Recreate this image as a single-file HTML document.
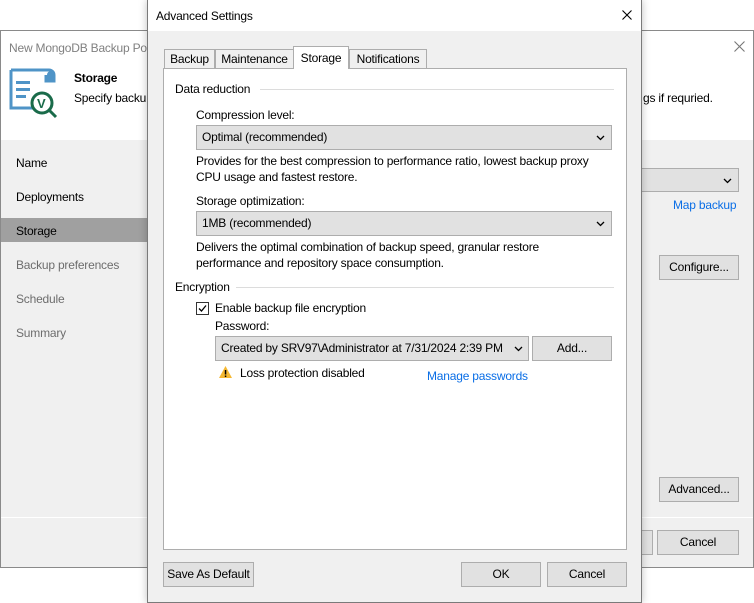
<!DOCTYPE html>
<html><head><style>
*{margin:0;padding:0;box-sizing:border-box}
body{width:754px;height:603px;background:#fff;position:relative;overflow:hidden;font-family:"Liberation Sans",sans-serif;font-size:12px;color:#000;letter-spacing:-0.2px}
.a{position:absolute;white-space:nowrap}
.btn{position:absolute;background:#e1e1e1;border:1px solid #adadad;text-align:center;line-height:23px}
.dd{position:absolute;background:#e1e1e1;border:1px solid #adadad;padding-left:5px;line-height:23px}
.dd svg{position:absolute;right:6px;top:9px}
.gray{color:#6d6d6d}
.link{color:#0a6ee6}
</style></head><body>
<div class="a" style="left:0;top:30px;width:754px;height:538px;border:1px solid #8a8a8a;background:#f0f0f0"></div>
<div class="a" style="left:1px;top:31px;width:752px;height:109px;background:#fff"></div>
<div class="a gray" style="left:9px;top:41px;color:#808080">New MongoDB Backup Po</div>
<svg class="a" style="left:734px;top:41px" width="11" height="11"><path d="M0.5 0.5l10 10M10.5 0.5l-10 10" stroke="#777" stroke-width="1.1"/></svg>
<svg class="a" style="left:9px;top:67px" width="50" height="52" viewBox="0 0 50 52">
<path d="M2 3h38a5 5 0 0 1 5 5v6h-8V8" fill="none" stroke="#4f94c7" stroke-width="3"/>
<path d="M2 3v38h26" fill="none" stroke="#4f94c7" stroke-width="3"/>
<path d="M38 8a4 4 0 0 1 8 0v6h-8z" fill="#4f94c7"/>
<rect x="7" y="14" width="14" height="3" fill="#4f94c7"/><rect x="7" y="21" width="14" height="3" fill="#4f94c7"/><rect x="7" y="28" width="10" height="3" fill="#4f94c7"/>
<circle cx="33" cy="36" r="10" fill="#fff" stroke="#1a6b4a" stroke-width="3"/>
<line x1="40" y1="43" x2="47" y2="50" stroke="#1a6b4a" stroke-width="3"/>
<text x="28" y="41" font-size="13" font-weight="bold" fill="#1a6b4a" font-family="Liberation Sans">V</text>
</svg>
<div class="a" style="left:74px;top:71px;font-weight:bold">Storage</div>
<div class="a" style="left:74px;top:91px">Specify backu</div>
<div class="a" style="left:643px;top:91px">gs if requried.</div>
<div class="a" style="left:1px;top:218px;width:146px;height:24px;background:#a0a0a0"></div>
<div class="a" style="left:16px;top:156px">Name</div>
<div class="a" style="left:16px;top:190px">Deployments</div>
<div class="a" style="left:16px;top:224px">Storage</div>
<div class="a gray" style="left:16px;top:258px">Backup preferences</div>
<div class="a gray" style="left:16px;top:292px">Schedule</div>
<div class="a gray" style="left:16px;top:326px">Summary</div>
<div class="dd" style="left:630px;top:168px;width:109px;height:24px"><svg width="9" height="6"><path d="M1 1l3.5 3.5L8 1" fill="none" stroke="#000" stroke-width="1.3"/></svg></div>
<div class="a link" style="left:673px;top:198px">Map backup</div>
<div class="btn" style="left:659px;top:255px;width:80px;height:25px">Configure...</div>
<div class="btn" style="left:659px;top:477px;width:80px;height:25px">Advanced...</div>
<div class="a" style="left:1px;top:517px;width:752px;height:1px;background:#fff"></div>
<div class="btn" style="left:630px;top:530px;width:23px;height:25px;border-left:none"></div>
<div class="btn" style="left:657px;top:530px;width:82px;height:25px">Cancel</div>
<div class="a" style="left:147px;top:0;width:495px;height:603px;border:1px solid #7a7a7a;background:#f0f0f0;box-shadow:0 0 8px rgba(0,0,0,.25)"></div>
<div class="a" style="left:148px;top:0;width:493px;height:31px;background:#fff"></div>
<div class="a" style="left:156px;top:9px">Advanced Settings</div>
<svg class="a" style="left:622px;top:10px" width="10" height="10"><path d="M0.5 0.5l9 9M9.5 0.5l-9 9" stroke="#000" stroke-width="1.1"/></svg>
<div class="a" style="left:163px;top:68px;width:464px;height:482px;background:#fff;border:1px solid #adadad"></div>
<div class="a" style="left:164px;top:49px;width:51px;height:20px;border:1px solid #adadad;background:#f0f0f0;text-align:center;line-height:19px">Backup</div>
<div class="a" style="left:215px;top:49px;width:79px;height:20px;border:1px solid #adadad;background:#f0f0f0;text-align:center;line-height:19px">Maintenance</div>
<div class="a" style="left:293px;top:46px;width:56px;height:23px;border:1px solid #adadad;border-bottom:none;background:#fff;text-align:center;line-height:22px">Storage</div>
<div class="a" style="left:349px;top:49px;width:78px;height:20px;border:1px solid #adadad;background:#f0f0f0;text-align:center;line-height:19px">Notifications</div>
<div class="a" style="left:175px;top:82px">Data reduction</div>
<div class="a" style="left:260px;top:89px;width:354px;height:1px;background:#dcdcdc"></div>
<div class="a" style="left:196px;top:108px">Compression level:</div>
<div class="dd" style="left:196px;top:125px;width:416px;height:25px">Optimal (recommended)<svg width="9" height="6"><path d="M1 1l3.5 3.5L8 1" fill="none" stroke="#000" stroke-width="1.3"/></svg></div>
<div class="a" style="left:196px;top:153px;line-height:16px">Provides for the best compression to performance ratio, lowest backup proxy<br>CPU usage and fastest restore.</div>
<div class="a" style="left:196px;top:194px">Storage optimization:</div>
<div class="dd" style="left:196px;top:211px;width:416px;height:25px">1MB (recommended)<svg width="9" height="6"><path d="M1 1l3.5 3.5L8 1" fill="none" stroke="#000" stroke-width="1.3"/></svg></div>
<div class="a" style="left:196px;top:239px;line-height:16px">Delivers the optimal combination of backup speed, granular restore<br>performance and repository space consumption.</div>
<div class="a" style="left:175px;top:280px">Encryption</div>
<div class="a" style="left:236px;top:287px;width:378px;height:1px;background:#dcdcdc"></div>
<div class="a" style="left:196px;top:302px;width:13px;height:13px;border:1px solid #333;background:#fff"><svg width="11" height="11" style="position:absolute;left:0;top:0"><path d="M2 5.5l2.5 2.5L9 2.5" fill="none" stroke="#000" stroke-width="1.3"/></svg></div>
<div class="a" style="left:215px;top:301px">Enable backup file encryption</div>
<div class="a" style="left:215px;top:319px">Password:</div>
<div class="dd" style="left:215px;top:336px;width:314px;height:25px;overflow:hidden">Created by SRV97\Administrator at 7/31/2024 2:39 PM<svg width="9" height="6" style="background:#e1e1e1;right:4px;top:9px;width:14px;padding-left:4px"><path d="M1 1l3.5 3.5L8 1" fill="none" stroke="#000" stroke-width="1.3"/></svg></div>
<div class="btn" style="left:532px;top:336px;width:80px;height:25px">Add...</div>
<svg class="a" style="left:218px;top:365px" width="15" height="14"><path d="M7.5 1L14 13H1z" fill="#f5b833"/><rect x="6.8" y="5" width="1.5" height="4.5" fill="#000"/><rect x="6.8" y="10.5" width="1.5" height="1.5" fill="#000"/></svg>
<div class="a" style="left:240px;top:366px">Loss protection disabled</div>
<div class="a link" style="left:427px;top:369px">Manage passwords</div>
<div class="btn" style="left:163px;top:562px;width:91px;height:25px">Save As Default</div>
<div class="btn" style="left:461px;top:562px;width:80px;height:25px">OK</div>
<div class="btn" style="left:547px;top:562px;width:80px;height:25px">Cancel</div>
</body></html>
